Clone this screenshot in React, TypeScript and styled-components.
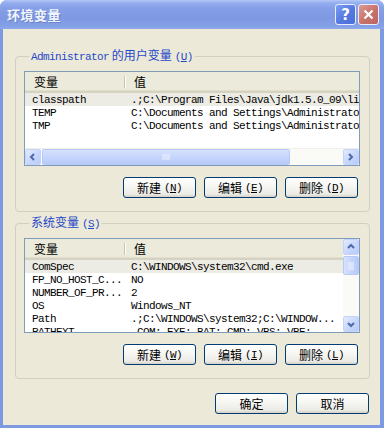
import React from 'react';
import styled, { createGlobalStyle } from 'styled-components';

const GlobalStyle = createGlobalStyle`
  html, body {
    margin: 0;
    padding: 0;
    background: #ffffff;
  }
  body {
    font-family: "Noto Sans CJK SC", "DejaVu Sans", sans-serif;
    font-size: 12px;
  }
`;

const CJK = `"Noto Sans CJK SC", "Noto Sans CJK TC", sans-serif`;
const MONO = `"Liberation Mono", "DejaVu Sans Mono", monospace`;

const Window = styled.div`
  width: 384px;
  height: 428px;
  box-sizing: border-box;
  display: flex;
  flex-direction: column;
  background: #7d99e2;
  border-radius: 7px 7px 0 0;
  overflow: hidden;
`;

const TitleBar = styled.div`
  height: 29px;
  flex: none;
  display: flex;
  align-items: center;
  justify-content: space-between;
  padding: 0 5px 0 7px;
  background: linear-gradient(
    to bottom,
    #b4c6f5 0px,
    #95aef0 3px,
    #859fe8 8px,
    #7e99e2 18px,
    #84a0e6 26px,
    #8ea9ec 29px
  );
`;

const Title = styled.span`
  font-family: ${CJK};
  font-weight: bold;
  font-size: 13px;
  color: #f2f5fd;
  text-shadow: 1px 1px 0 #6a84c8;
  letter-spacing: 0.5px;
`;

const Caps = styled.div`
  display: flex;
  gap: 2px;
`;

const CapButton = styled.div<{ $kind: 'help' | 'close' }>`
  width: 21px;
  height: 21px;
  box-sizing: border-box;
  border: 1px solid #e8eefc;
  border-radius: 3px;
  display: flex;
  align-items: center;
  justify-content: center;
  color: #ffffff;
  font-family: "DejaVu Sans", sans-serif;
  font-weight: bold;
  font-size: 15px;
  background: ${p =>
    p.$kind === 'help'
      ? 'linear-gradient(135deg, #7d9cf0 0%, #5478e0 55%, #4a6fd8 100%)'
      : 'linear-gradient(135deg, #dc9a92 0%, #c8716a 55%, #bd6460 100%)'};
`;

const Client = styled.div`
  flex: 1;
  margin: 0 4px 3px 3px;
  background: #ece9d8;
  padding: 19px 10px 0 12px;
  display: flex;
  flex-direction: column;
`;

const Group = styled.fieldset<{ $gap?: number }>`
  margin: ${p => p.$gap ?? 0}px 0 0 0;
  border: 1px solid #d0d0bf;
  border-radius: 4px;
  padding: 7px 9px 13px 8px;
  min-width: 0;
`;

const Legend = styled.legend`
  font-family: ${CJK};
  font-size: 12px;
  line-height: 14px;
  color: #1f48c8;
  padding: 0 2px;
  margin-left: 5px;
`;

const LegendMono = styled.span`
  font-family: ${MONO};
  font-size: 11px;
  letter-spacing: -0.6px;
`;

const ListView = styled.div<{ $row?: boolean }>`
  height: 95px;
  box-sizing: border-box;
  border: 1px solid #7f9db9;
  background: #ffffff;
  display: flex;
  flex-direction: ${p => (p.$row ? 'row' : 'column')};
  overflow: hidden;
`;

const ListMain = styled.div`
  flex: 1;
  min-width: 0;
  display: flex;
  flex-direction: column;
  overflow: hidden;
`;

const Header = styled.div`
  height: 21px;
  flex: none;
  display: flex;
  box-sizing: border-box;
  background: #ebeadb;
  border-bottom: 2px solid #d6d2c2;
  box-shadow: inset 0 -1px 0 #e2decd;
`;

const HeadCell = styled.div<{ $w?: number }>`
  ${p => (p.$w ? `width: ${p.$w}px; flex: none;` : 'flex: 1;')}
  box-sizing: border-box;
  padding-left: 9px;
  display: flex;
  align-items: center;
  font-family: ${CJK};
  font-size: 12px;
  color: #000000;
  position: relative;
  ${p =>
    p.$w
      ? `&::after {
    content: '';
    position: absolute;
    right: 0;
    top: 4px;
    bottom: 3px;
    width: 1px;
    background: #c7c5b2;
    box-shadow: 1px 0 0 #ffffff;
  }`
      : ''}
`;

const Rows = styled.div`
  flex: 1;
  overflow: hidden;
`;

const Row = styled.div<{ $sel?: boolean }>`
  height: 13px;
  display: flex;
  align-items: center;
  background: ${p => (p.$sel ? '#ecebe4' : 'transparent')};
  font-family: ${MONO};
  font-size: 11px;
  letter-spacing: -0.6px;
  color: #000000;
  white-space: nowrap;
`;

const Cell = styled.div<{ $w?: number }>`
  ${p => (p.$w ? `width: ${p.$w}px; flex: none;` : 'flex: 1;')}
  box-sizing: border-box;
  padding-left: ${p => (p.$w ? 7 : 6)}px;
  overflow: hidden;
`;

const HScroll = styled.div`
  height: 16px;
  flex: none;
  display: flex;
  background: #fafaf6;
  border-top: 1px solid #f0efe8;
`;

const VScroll = styled.div`
  width: 16px;
  flex: none;
  display: flex;
  flex-direction: column;
  background: #fafaf6;
`;

const ArrowBtn = styled.div`
  width: 16px;
  height: 16px;
  flex: none;
  box-sizing: border-box;
  border: 1px solid #c3d3fd;
  border-radius: 2px;
  background: linear-gradient(135deg, #e2eafe 0%, #c6d5fc 60%, #b9cbf9 100%);
  display: flex;
  align-items: center;
  justify-content: center;
`;

const Thumb = styled.div<{ $size: number; $vertical?: boolean }>`
  ${p => (p.$vertical ? `height: ${p.$size}px; width: 16px; margin-top: 1px;` : `width: ${p.$size}px; height: 16px; margin-left: 1px;`)}
  flex: none;
  box-sizing: border-box;
  border: 1px solid #b7c9f7;
  border-radius: 2px;
  background: ${p =>
    p.$vertical
      ? 'linear-gradient(to right, #d6e1fd, #c3d3fb 60%, #b7c9f7)'
      : 'linear-gradient(to bottom, #d6e1fd, #c3d3fb 60%, #b7c9f7)'};
  display: flex;
  align-items: center;
  justify-content: center;
`;

const Track = styled.div`
  flex: 1;
`;

const ButtonRow = styled.div<{ $top: number; $right: number }>`
  display: flex;
  justify-content: flex-end;
  gap: 8px;
  margin-top: ${p => p.$top}px;
  padding-right: ${p => p.$right}px;
`;

const Button = styled.div`
  width: 73px;
  height: 21px;
  box-sizing: border-box;
  border: 1px solid #003c74;
  border-radius: 3px;
  background: linear-gradient(to bottom, #ffffff 0%, #f7f7f4 40%, #ecebe6 85%, #d6d0c5 100%);
  display: flex;
  align-items: center;
  justify-content: center;
  font-family: ${CJK};
  font-size: 12px;
  color: #000000;
`;

const Key = styled.span`
  font-family: ${MONO};
  font-size: 11px;
  letter-spacing: -0.6px;
  margin-left: 3px;
  & u {
    text-decoration: underline;
  }
`;

const Chevron: React.FC<{ dir: 'left' | 'right' | 'up' | 'down' }> = ({ dir }) => {
  const pts = {
    left: '6,2 3,5 6,8',
    right: '3,2 6,5 3,8',
    up: '2,6 5,3 8,6',
    down: '2,4 5,7 8,4',
  }[dir];
  return (
    <svg width="10" height="10" viewBox="0 0 10 10">
      <polyline points={pts} fill="none" stroke="#4d6aa8" strokeWidth="2" />
    </svg>
  );
};

const Grip: React.FC<{ vertical?: boolean }> = ({ vertical }) => (
  <svg width="8" height="8" viewBox="0 0 8 8">
    {[1, 3, 5, 7].map(v =>
      vertical ? (
        <line key={v} x1="1" y1={v} x2="7" y2={v} stroke="#eef3ff" strokeWidth="1" />
      ) : (
        <line key={v} x1={v} y1="1" x2={v} y2="7" stroke="#eef3ff" strokeWidth="1" />
      )
    )}
  </svg>
);

type Variable = { name: string; value: string };

const userVars: Variable[] = [
  { name: 'classpath', value: '.;C:\\Program Files\\Java\\jdk1.5.0_09\\lib' },
  { name: 'TEMP', value: 'C:\\Documents and Settings\\Administrator' },
  { name: 'TMP', value: 'C:\\Documents and Settings\\Administrator' },
];

const systemVars: Variable[] = [
  { name: 'ComSpec', value: 'C:\\WINDOWS\\system32\\cmd.exe' },
  { name: 'FP_NO_HOST_C...', value: 'NO' },
  { name: 'NUMBER_OF_PR...', value: '2' },
  { name: 'OS', value: 'Windows_NT' },
  { name: 'Path', value: '.;C:\\WINDOWS\\system32;C:\\WINDOW...' },
  { name: 'PATHEXT', value: '.COM;.EXE;.BAT;.CMD;.VBS;.VBE;' },
];

const Columns: React.FC = () => (
  <Header>
    <HeadCell $w={100}>变量</HeadCell>
    <HeadCell>值</HeadCell>
  </Header>
);

const VarRows: React.FC<{ vars: Variable[] }> = ({ vars }) => (
  <Rows>
    {vars.map((v, i) => (
      <Row key={v.name} $sel={i === 0}>
        <Cell $w={100}>{v.name}</Cell>
        <Cell>{v.value}</Cell>
      </Row>
    ))}
  </Rows>
);

const ActionButtons: React.FC<{ keys: [string, string, string] }> = ({ keys }) => (
  <ButtonRow $top={11} $right={2}>
    <Button>
      新建<Key>(<u>{keys[0]}</u>)</Key>
    </Button>
    <Button>
      编辑<Key>(<u>{keys[1]}</u>)</Key>
    </Button>
    <Button>
      删除<Key>(<u>{keys[2]}</u>)</Key>
    </Button>
  </ButtonRow>
);

const App: React.FC = () => {
  return (
    <>
      <GlobalStyle />
      <Window>
        <TitleBar>
          <Title>环境变量</Title>
          <Caps>
            <CapButton $kind="help">?</CapButton>
            <CapButton $kind="close">
              <svg width="11" height="11" viewBox="0 0 11 11">
                <path d="M1.5 1.5 L9.5 9.5 M9.5 1.5 L1.5 9.5" stroke="#ffffff" strokeWidth="2.2" />
              </svg>
            </CapButton>
          </Caps>
        </TitleBar>
        <Client>
          <Group>
            <Legend>
              <LegendMono>Administrator</LegendMono> 的用户变量<Key>(<u>U</u>)</Key>
            </Legend>
            <ListView>
              <Columns />
              <VarRows vars={userVars} />
              <HScroll>
                <ArrowBtn>
                  <Chevron dir="left" />
                </ArrowBtn>
                <Thumb $size={248}>
                  <Grip />
                </Thumb>
                <Track />
                <ArrowBtn>
                  <Chevron dir="right" />
                </ArrowBtn>
              </HScroll>
            </ListView>
            <ActionButtons keys={['N', 'E', 'D']} />
          </Group>

          <Group $gap={3}>
            <Legend>
              系统变量<Key>(<u>S</u>)</Key>
            </Legend>
            <ListView $row>
              <ListMain>
                <Columns />
                <VarRows vars={systemVars} />
              </ListMain>
              <VScroll>
                <ArrowBtn>
                  <Chevron dir="up" />
                </ArrowBtn>
                <Thumb $vertical $size={19}>
                  <Grip vertical />
                </Thumb>
                <Track />
                <ArrowBtn>
                  <Chevron dir="down" />
                </ArrowBtn>
              </VScroll>
            </ListView>
            <ActionButtons keys={['W', 'I', 'L']} />
          </Group>

          <ButtonRow $top={14} $right={1}>
            <Button>确定</Button>
            <Button>取消</Button>
          </ButtonRow>
        </Client>
      </Window>
    </>
  );
};

export default App;
